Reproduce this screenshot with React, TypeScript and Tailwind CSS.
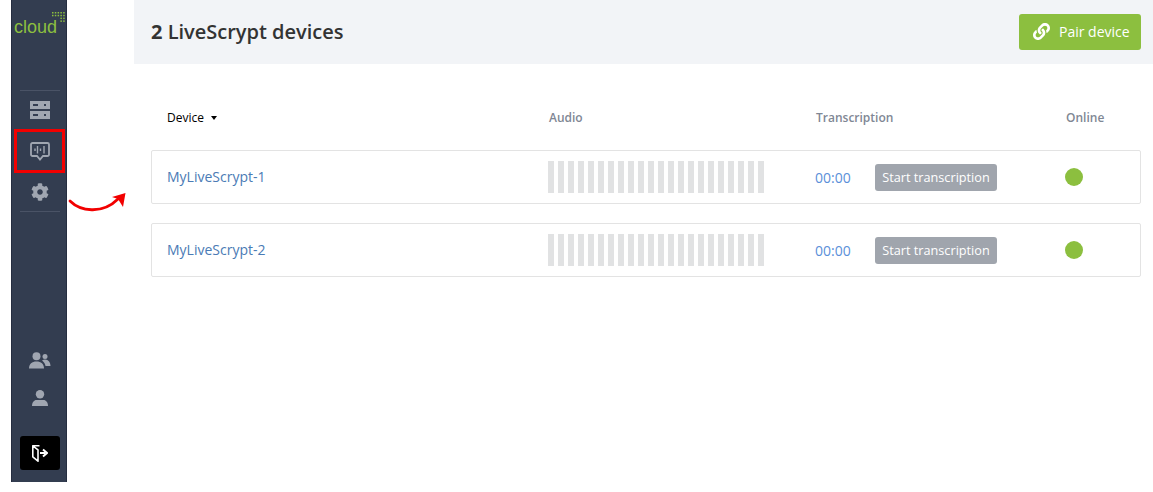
import { FaCog, FaLink } from "react-icons/fa";

const BARS = Array.from({ length: 22 }, (_, i) => i);

function ServerIcon() {
  return (
    <svg width="20" height="18" viewBox="0 0 20 18" fill="#a0a6b1">
      <path fillRule="evenodd" d="M0 0h20v8H0zM3 3v2h5V3zM14 3v2h2V3z" />
      <path fillRule="evenodd" d="M0 10h20v8H0zM3 13v2h5v-2zM14 13v2h2v-2z" />
    </svg>
  );
}

function ChatIcon() {
  return (
    <svg width="20" height="19" viewBox="0 0 20 19" fill="none" stroke="#a0a6b1">
      <path d="M2.500 1h15A1.500 1.500 0 0 1 19 2.500v10a1.500 1.500 0 0 1-1.500 1.500H13l-3 3.500L7 14H2.500A1.500 1.500 0 0 1 1 12.500v-10A1.500 1.500 0 0 1 2.500 1z" strokeWidth="1.800" />
      <path d="M5 6.500v2.500M7.500 4v7.500M10.500 6.500v2.500M14 4v7.500" strokeWidth="1.400" />
    </svg>
  );
}

function UsersIcon() {
  return (
    <svg width="22" height="17" viewBox="0 0 22 17" fill="#a0a6b1">
      <circle cx="7.500" cy="4.200" r="4" />
      <path d="M0 16.500C0 12 3 9.500 7.500 9.500S15 12 15 16.500z" />
      <circle cx="16" cy="4.500" r="2.500" />
      <path d="M13 8.500c1-.8 2-1 3-1 3.500 0 5.500 3 5.500 6.500h-5c-.3-2-1.500-4-3.500-5.500z" />
    </svg>
  );
}

function UserIcon() {
  return (
    <svg width="16" height="16" viewBox="0 0 16 16" fill="#a0a6b1">
      <circle cx="8" cy="4.300" r="4.200" />
      <path d="M0 16c0-3.500 2-6 4.500-6h7c2.500 0 4.500 2.500 4.500 6z" />
    </svg>
  );
}

function ExitIcon() {
  return (
    <svg width="16" height="17" viewBox="0 0 16 17" fill="none" stroke="#ffffff">
      <path d="M.8.800h6.700M.8.800v11l5.200 4.400V4.800z" strokeWidth="1.600" strokeLinejoin="round" />
      <path d="M8 8h5.500" strokeWidth="2" />
      <path d="M11 4.500L15 8l-4 3.500" strokeWidth="1.900" />
    </svg>
  );
}

function Logo() {
  const dots: [number, number][] = [];
  for (let x = 0; x < 5; x++) {
    dots.push([x, 0], [x, 1]);
  }
  dots.push([3, 2], [4, 2], [3, 3], [4, 3]);
  return (
    <div className="relative h-[91px] shrink-0 border-b border-[#4a5366]">
      <span className="absolute left-[-6px] top-[15px] text-[18px] leading-[24px] text-[#8cbf3f] font-['Liberation_Sans',sans-serif]">
        cloud
      </span>
      <svg className="absolute left-[32px] top-[12px]" width="14" height="13" viewBox="0 0 14 13" fill="#8cbf3f">
        {dots.map(([x, y]) => (
          <rect key={`${x}-${y}`} x={x * 2.800} y={y * 2.800} width="1.500" height="1.500" />
        ))}
      </svg>
    </div>
  );
}

function Sidebar() {
  return (
    <aside className="relative ml-[11px] flex h-[482px] w-[56px] shrink-0 flex-col border-x border-[#252d40] bg-[#333d50] pl-[8px] pr-[6px]">
      <Logo />
      <div className="flex h-[40px] items-center justify-center pb-[2px]">
        <ServerIcon />
      </div>
      <div className="flex h-[41px] items-center justify-center">
        <ChatIcon />
      </div>
      <div className="flex h-[39px] items-center justify-center pt-[1px]">
        <FaCog className="text-[18px] text-[#a0a6b1]" />
      </div>
      <div className="border-b border-[#4a5366]" />
      <div className="mt-auto flex h-[37px] items-center justify-center">
        <UsersIcon />
      </div>
      <div className="flex h-[37px] items-center justify-center">
        <UserIcon />
      </div>
      <div className="mb-[12px] mt-[20px] flex h-[34px] items-center justify-center rounded-[3px] bg-black">
        <ExitIcon />
      </div>
      <div className="absolute left-[2px] top-[129px] h-[44px] w-[51px] border-[3px] border-[#f20000]" />
    </aside>
  );
}

function Row({ name }: { name: string }) {
  return (
    <div className="flex h-[54px] items-center rounded-[2px] border border-[#e3e3e3] pl-[15px]">
      <div className="w-[381px] pb-[2px] text-[14px] text-[#4a7bb5]">{name}</div>
      <div className="w-[267px]">
        <div className="flex h-[32px] gap-[4px]">
          {BARS.map((i) => (
            <div key={i} className="w-[6px] bg-[#e1e2e3]" />
          ))}
        </div>
      </div>
      <div className="flex w-[250px] items-center">
        <span className="w-[60px] text-[14px] text-[#5b8fd9]">00:00</span>
        <button className="h-[27px] w-[122px] rounded-[3px] bg-[#a0a5ad] pt-[1px] text-[12.700px] text-white">
          Start transcription
        </button>
      </div>
      <div className="h-[18px] w-[18px] rounded-full bg-[#8cbf3f]" />
    </div>
  );
}

export default function App() {
  return (
    <div className="relative flex h-[492px] w-[1153px] overflow-hidden bg-white font-['Open_Sans',sans-serif]">
      <Sidebar />
      <main className="ml-[67px] flex-1">
        <header className="flex h-[64px] items-center justify-between bg-[#f2f4f7] pl-[17px] pr-[12px]">
          <h1 className="text-[20px] font-semibold text-[#333333]">
            <span className="font-bold">2</span> LiveScrypt devices
          </h1>
          <button className="flex h-[36px] w-[122px] items-center gap-[9px] rounded-[3px] bg-[#8cbf3f] pb-[1px] pl-[14px] text-[14px] text-white">
            <FaLink className="text-[17px]" />
            Pair device
          </button>
        </header>
        <div className="pl-[17px] pr-[12px]">
          <div className="flex h-[86px] items-center pl-[16px] pt-[21px] text-[12px] font-semibold text-[#7f8794]">
            <div className="flex w-[382px] items-center gap-[7px] font-medium text-black">
              <span>Device</span>
              <span className="h-0 w-0 border-x-[3.500px] border-t-[4px] border-x-transparent border-t-black" />
            </div>
            <div className="w-[267px]">Audio</div>
            <div className="w-[250px]">Transcription</div>
            <div>Online</div>
          </div>
          <div className="flex flex-col gap-[19px]">
            <Row name="MyLiveScrypt-1" />
            <Row name="MyLiveScrypt-2" />
          </div>
        </div>
      </main>
      <svg className="absolute left-[68px] top-[188px]" width="60" height="28" viewBox="0 0 60 28" fill="none">
        <path d="M2 13C12 23 34 27 50 11" stroke="#f20000" strokeWidth="2.800" strokeLinecap="round" />
        <path d="M57.500 5L44 9L50 11L55 19Z" fill="#f20000" />
      </svg>
    </div>
  );
}
